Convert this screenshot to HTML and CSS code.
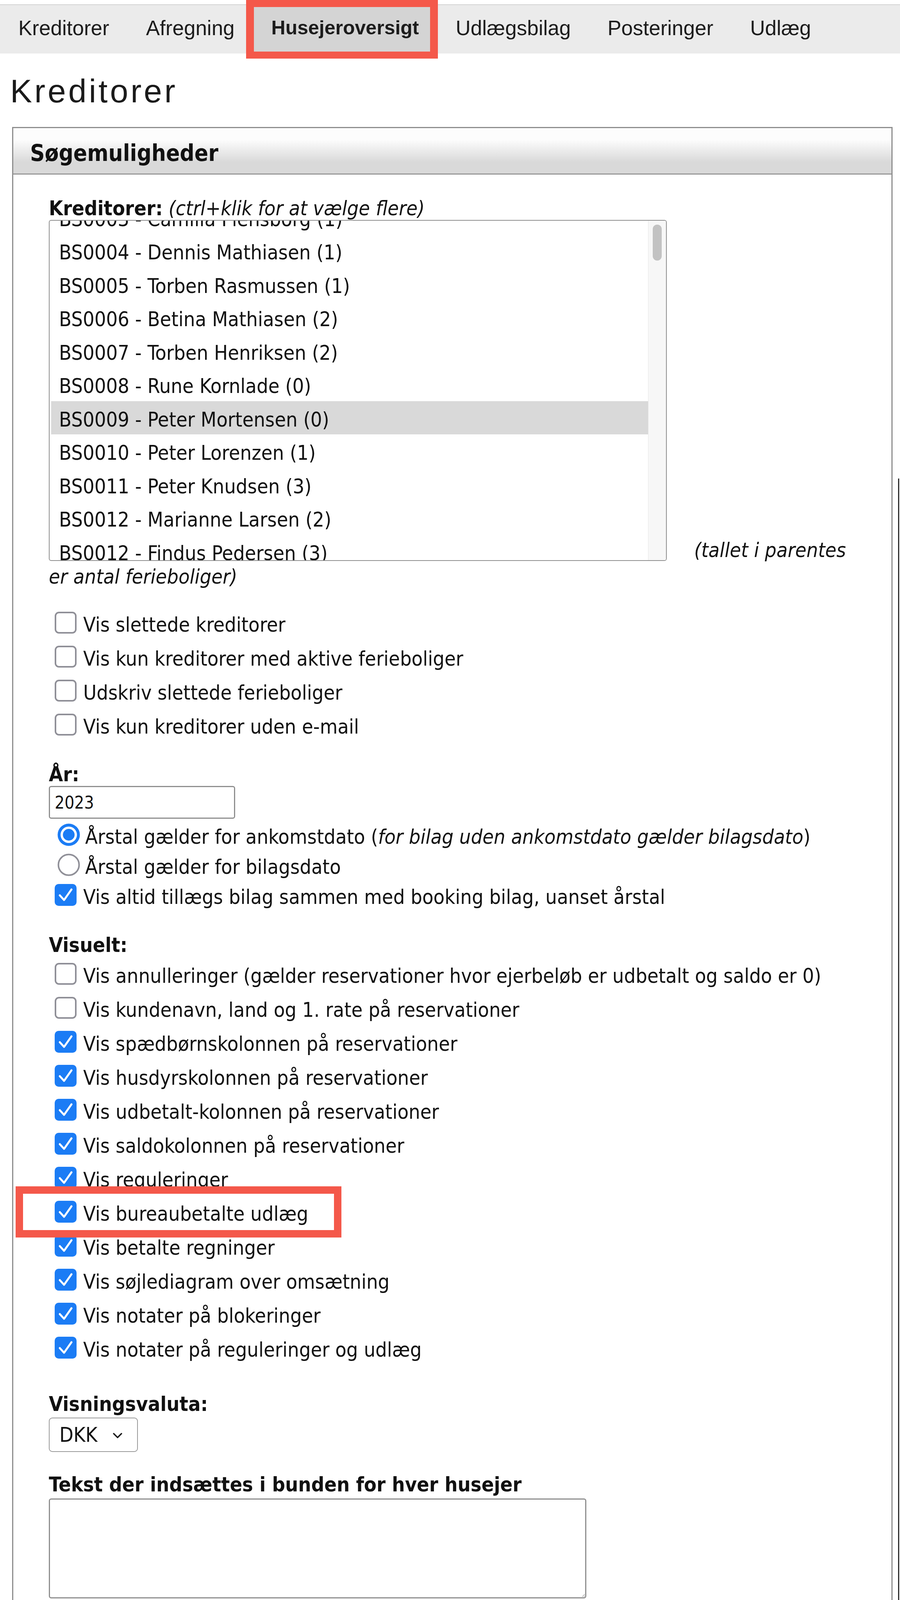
FILE: index.html
```html
<!DOCTYPE html>
<html lang="da">
<head>
<meta charset="utf-8">
<title>Kreditorer</title>
<link rel="stylesheet" href="styles.css">
</head>
<body>
<nav class="tabs">
  <a class="tab">Kreditorer</a>
  <a class="tab">Afregning</a>
  <a class="tab active">Husejeroversigt</a>
  <a class="tab">Udlægsbilag</a>
  <a class="tab">Posteringer</a>
  <a class="tab">Udlæg</a>
</nav>
<div class="mark mark-tab"></div>

<h1 class="title">Kreditorer</h1>

<section class="panel">
  <header class="panel-head">Søgemuligheder</header>
  <div class="panel-body">
    <div class="label"><b>Kreditorer:</b> <i>(ctrl+klik for at vælge flere)</i></div>
    <div class="list-wrap"><div class="listbox"><div class="lb-inner"><div class="opts"><div class="opts-scroll">
      <div class="opt">BS0003 - Camilla Flensborg (1)</div>
      <div class="opt">BS0004 - Dennis Mathiasen (1)</div>
      <div class="opt">BS0005 - Torben Rasmussen (1)</div>
      <div class="opt">BS0006 - Betina Mathiasen (2)</div>
      <div class="opt">BS0007 - Torben Henriksen (2)</div>
      <div class="opt">BS0008 - Rune Kornlade (0)</div>
      <div class="opt sel">BS0009 - Peter Mortensen (0)</div>
      <div class="opt">BS0010 - Peter Lorenzen (1)</div>
      <div class="opt">BS0011 - Peter Knudsen (3)</div>
      <div class="opt">BS0012 - Marianne Larsen (2)</div>
      <div class="opt">BS0012 - Findus Pedersen (3)</div>
    </div></div><div class="sb"><div class="sb-thumb"></div></div></div></div><i>(tallet i parentes er antal ferieboliger)</i></div>

    <div class="group g-first">
      <label class="row"><svg class="cb" viewBox="0 0 56 56"><rect x="2" y="2" width="52" height="52" rx="9" fill="#fff" stroke="#8f8f97" stroke-width="4"/></svg><span class="txt">Vis slettede kreditorer</span></label>
      <label class="row"><svg class="cb" viewBox="0 0 56 56"><rect x="2" y="2" width="52" height="52" rx="9" fill="#fff" stroke="#8f8f97" stroke-width="4"/></svg><span class="txt">Vis kun kreditorer med aktive ferieboliger</span></label>
      <label class="row"><svg class="cb" viewBox="0 0 56 56"><rect x="2" y="2" width="52" height="52" rx="9" fill="#fff" stroke="#8f8f97" stroke-width="4"/></svg><span class="txt">Udskriv slettede ferieboliger</span></label>
      <label class="row"><svg class="cb" viewBox="0 0 56 56"><rect x="2" y="2" width="52" height="52" rx="9" fill="#fff" stroke="#8f8f97" stroke-width="4"/></svg><span class="txt">Vis kun kreditorer uden e-mail</span></label>
    </div>

    <div class="label l-year"><b>År:</b></div>
    <input class="year" type="text" value="2023">
    <div class="group g-year">
      <label class="row tight radio"><svg class="rd" viewBox="0 0 58 58"><circle cx="29" cy="29" r="28.5" fill="#1b7cf5"/><circle cx="29" cy="29" r="21" fill="#fff"/><circle cx="29" cy="29" r="15" fill="#1b7cf5"/></svg><span class="txt">Årstal gælder for ankomstdato (<i>for bilag uden ankomstdato gælder bilagsdato</i>)</span></label>
      <label class="row tight radio"><svg class="rd" viewBox="0 0 58 58"><circle cx="29" cy="29" r="26.5" fill="#fff" stroke="#8f8f97" stroke-width="4"/></svg><span class="txt">Årstal gælder for bilagsdato</span></label>
      <label class="row tight"><svg class="cb" viewBox="0 0 56 56"><rect width="56" height="56" rx="10" fill="#1b7cf5"/><path d="M13 29 L24 41 L43 14" fill="none" stroke="#fff" stroke-width="5" stroke-linecap="round" stroke-linejoin="round"/></svg><span class="txt">Vis altid tillægs bilag sammen med booking bilag, uanset årstal</span></label>
    </div>

    <div class="label l-vis"><b>Visuelt:</b></div>
    <div class="group">
      <label class="row"><svg class="cb" viewBox="0 0 56 56"><rect x="2" y="2" width="52" height="52" rx="9" fill="#fff" stroke="#8f8f97" stroke-width="4"/></svg><span class="txt">Vis annulleringer (gælder reservationer hvor ejerbeløb er udbetalt og saldo er 0)</span></label>
      <label class="row"><svg class="cb" viewBox="0 0 56 56"><rect x="2" y="2" width="52" height="52" rx="9" fill="#fff" stroke="#8f8f97" stroke-width="4"/></svg><span class="txt">Vis kundenavn, land og 1. rate på reservationer</span></label>
      <label class="row"><svg class="cb" viewBox="0 0 56 56"><rect width="56" height="56" rx="10" fill="#1b7cf5"/><path d="M13 29 L24 41 L43 14" fill="none" stroke="#fff" stroke-width="5" stroke-linecap="round" stroke-linejoin="round"/></svg><span class="txt">Vis spædbørnskolonnen på reservationer</span></label>
      <label class="row"><svg class="cb" viewBox="0 0 56 56"><rect width="56" height="56" rx="10" fill="#1b7cf5"/><path d="M13 29 L24 41 L43 14" fill="none" stroke="#fff" stroke-width="5" stroke-linecap="round" stroke-linejoin="round"/></svg><span class="txt">Vis husdyrskolonnen på reservationer</span></label>
      <label class="row"><svg class="cb" viewBox="0 0 56 56"><rect width="56" height="56" rx="10" fill="#1b7cf5"/><path d="M13 29 L24 41 L43 14" fill="none" stroke="#fff" stroke-width="5" stroke-linecap="round" stroke-linejoin="round"/></svg><span class="txt">Vis udbetalt-kolonnen på reservationer</span></label>
      <label class="row"><svg class="cb" viewBox="0 0 56 56"><rect width="56" height="56" rx="10" fill="#1b7cf5"/><path d="M13 29 L24 41 L43 14" fill="none" stroke="#fff" stroke-width="5" stroke-linecap="round" stroke-linejoin="round"/></svg><span class="txt">Vis saldokolonnen på reservationer</span></label>
      <label class="row"><svg class="cb" viewBox="0 0 56 56"><rect width="56" height="56" rx="10" fill="#1b7cf5"/><path d="M13 29 L24 41 L43 14" fill="none" stroke="#fff" stroke-width="5" stroke-linecap="round" stroke-linejoin="round"/></svg><span class="txt">Vis reguleringer</span></label>
      <label class="row"><svg class="cb" viewBox="0 0 56 56"><rect width="56" height="56" rx="10" fill="#1b7cf5"/><path d="M13 29 L24 41 L43 14" fill="none" stroke="#fff" stroke-width="5" stroke-linecap="round" stroke-linejoin="round"/></svg><span class="txt">Vis bureaubetalte udlæg</span></label>
      <label class="row"><svg class="cb" viewBox="0 0 56 56"><rect width="56" height="56" rx="10" fill="#1b7cf5"/><path d="M13 29 L24 41 L43 14" fill="none" stroke="#fff" stroke-width="5" stroke-linecap="round" stroke-linejoin="round"/></svg><span class="txt">Vis betalte regninger</span></label>
      <label class="row"><svg class="cb" viewBox="0 0 56 56"><rect width="56" height="56" rx="10" fill="#1b7cf5"/><path d="M13 29 L24 41 L43 14" fill="none" stroke="#fff" stroke-width="5" stroke-linecap="round" stroke-linejoin="round"/></svg><span class="txt">Vis søjlediagram over omsætning</span></label>
      <label class="row"><svg class="cb" viewBox="0 0 56 56"><rect width="56" height="56" rx="10" fill="#1b7cf5"/><path d="M13 29 L24 41 L43 14" fill="none" stroke="#fff" stroke-width="5" stroke-linecap="round" stroke-linejoin="round"/></svg><span class="txt">Vis notater på blokeringer</span></label>
      <label class="row"><svg class="cb" viewBox="0 0 56 56"><rect width="56" height="56" rx="10" fill="#1b7cf5"/><path d="M13 29 L24 41 L43 14" fill="none" stroke="#fff" stroke-width="5" stroke-linecap="round" stroke-linejoin="round"/></svg><span class="txt">Vis notater på reguleringer og udlæg</span></label>
    </div>

    <div class="label l-cur"><b>Visningsvaluta:</b></div>
    <div class="select"><span>DKK</span><svg class="chev" viewBox="0 0 26 16"><path d="M3 3 L13 13 L23 3" fill="none" stroke="#1a1a1a" stroke-width="3.5" stroke-linecap="round" stroke-linejoin="round"/></svg></div>

    <div class="label l-text"><b>Tekst der indsættes i bunden for hver husejer</b></div>
    <textarea class="notes"></textarea>
  </div>
</section>

<div class="mark mark-row"></div>
<div class="edge-line"></div>
</body>
</html>
```

FILE: styles.css
```css
* { box-sizing: border-box; }

html, body {
  margin: 0;
  background: #fff;
}

body {
  position: relative;
  width: 2304px;
  min-height: 4146px;
  font-family: "DejaVu Sans Condensed", "DejaVu Sans", Verdana, sans-serif;
  font-stretch: semi-condensed;
  color: #111;
  overflow: hidden;
}

/* ---------- tabs ---------- */
.tabs {
  display: flex;
  margin-top: 11px;
  height: 126px;
  border-top: 2px solid #d3d3d3;
  background: #ebebeb;
  font-family: "Liberation Sans", Arial, sans-serif;
  font-stretch: normal;
  font-size: 53px;
}

.tab {
  padding: 0 47px 7px;
  line-height: 117px;
  color: #1c1c1c;
  white-space: nowrap;
}

.tab.active {
  background: #d4d4d4;
  font-weight: bold;
  font-size: 50px;
}

/* annotation boxes */
.mark {
  position: absolute;
  border-style: solid;
  border-color: #f4584a;
}

.mark-tab {
  left: 630px;
  top: 0;
  width: 491px;
  height: 150px;
  border-width: 18px 20px;
}

.mark-row {
  left: 40px;
  top: 3037px;
  width: 834px;
  height: 131px;
  border-width: 19px 19px;
}

.edge-line {
  position: absolute;
  left: 2299px;
  top: 1225px;
  width: 3px;
  height: 2921px;
  background: #2a2a2a;
}

/* ---------- heading ---------- */
.title {
  margin: 46px 0 0 26px;
  font-family: "Liberation Sans", Arial, sans-serif;
  font-stretch: normal;
  font-weight: normal;
  font-size: 84px;
  line-height: 100px;
  letter-spacing: 6px;
  color: #1a1a1a;
}

/* ---------- panel ---------- */
.panel {
  margin: 42px 0 0 31px;
  width: 2254px;
  border: 3px solid #8e8e8e;
}

.panel-head {
  height: 119px;
  padding: 30px 0 0 43px;
  font-weight: bold;
  font-size: 58px;
  line-height: 68px;
  border-bottom: 3px solid #999;
  background: linear-gradient(to bottom, #fdfdfd 0, #fdfdfd 29px, #d9d9d9 87px, #d9d9d9 100%);
}

.panel-body {
  padding: 56px 72px 34px 91px;
  font-size: 52px;
}

.label {
  line-height: 60px;
  white-space: nowrap;
}

.l-year { margin-top: 54px; }
.l-vis { margin-top: 60px; }
.l-cur { margin-top: 71px; }
.l-text { margin-top: 53px; }

/* ---------- listbox ---------- */
.list-wrap {
  line-height: 68px;
}

.listbox {
  display: inline-block;
  vertical-align: -10px;
  width: 1582px;
  height: 873px;
  margin-right: 70px;
  border: 2px solid #8f8f8f;
  border-radius: 6px;
  overflow: hidden;
  background: #fff;
}

.lb-inner {
  display: flex;
  height: 100%;
}

.opts {
  flex: 1;
  padding-left: 4px;
  overflow: hidden;
}

.opts-scroll {
  margin-top: -51.5px;
}

.opt {
  height: 85.5px;
  padding: 10px 0 0 20px;
  line-height: 75px;
  white-space: nowrap;
}

.opt.sel {
  background: #d9d9d9;
}

.sb {
  width: 46px;
  padding: 10px 0 0 11px;
  background: #f7f7f7;
  border-left: 1px solid #e6e6e6;
}

.sb-thumb {
  width: 23px;
  height: 92px;
  border-radius: 12px;
  background: #c2c2c2;
}

/* ---------- option rows ---------- */
.g-first { margin-top: 40px; }
.g-year { margin-top: 2px; }

.row {
  display: flex;
  align-items: center;
  gap: 17px;
  height: 87px;
  padding-left: 15px;
  white-space: nowrap;
}

.row.tight { height: 77px; }

.row.radio {
  padding-left: 22px;
  gap: 13px;
}

.cb {
  flex: none;
  width: 56px;
  height: 56px;
}

.rd {
  flex: none;
  width: 58px;
  height: 58px;
}

.txt {
  padding-top: 10px;
}

/* ---------- inputs ---------- */
.year {
  display: block;
  width: 477px;
  height: 84px;
  margin: 0;
  padding: 0 0 0 12px;
  border: 3px solid #8f8f8f;
  border-radius: 6px;
  font-family: "DejaVu Sans Condensed", "DejaVu Sans", Verdana, sans-serif;
  font-stretch: semi-condensed;
  font-size: 44px;
  color: #111;
  background: #fff;
}

.select {
  display: flex;
  align-items: center;
  justify-content: space-between;
  width: 228px;
  height: 88px;
  margin-top: 5px;
  padding: 0 37px 0 25px;
  border: 2px solid #9a9a9a;
  border-radius: 9px;
  background: #fff;
  font-size: 52px;
}

.chev {
  width: 26px;
  height: 16px;
  margin-top: 4px;
}

.notes {
  display: block;
  width: 1376px;
  height: 256px;
  margin: 6px 0 0;
  border: 3px solid #8f8f8f;
  border-radius: 6px;
  resize: both;
  font-family: "DejaVu Sans Condensed", "DejaVu Sans", Verdana, sans-serif;
  font-size: 44px;
  background: #fff;
}
```
